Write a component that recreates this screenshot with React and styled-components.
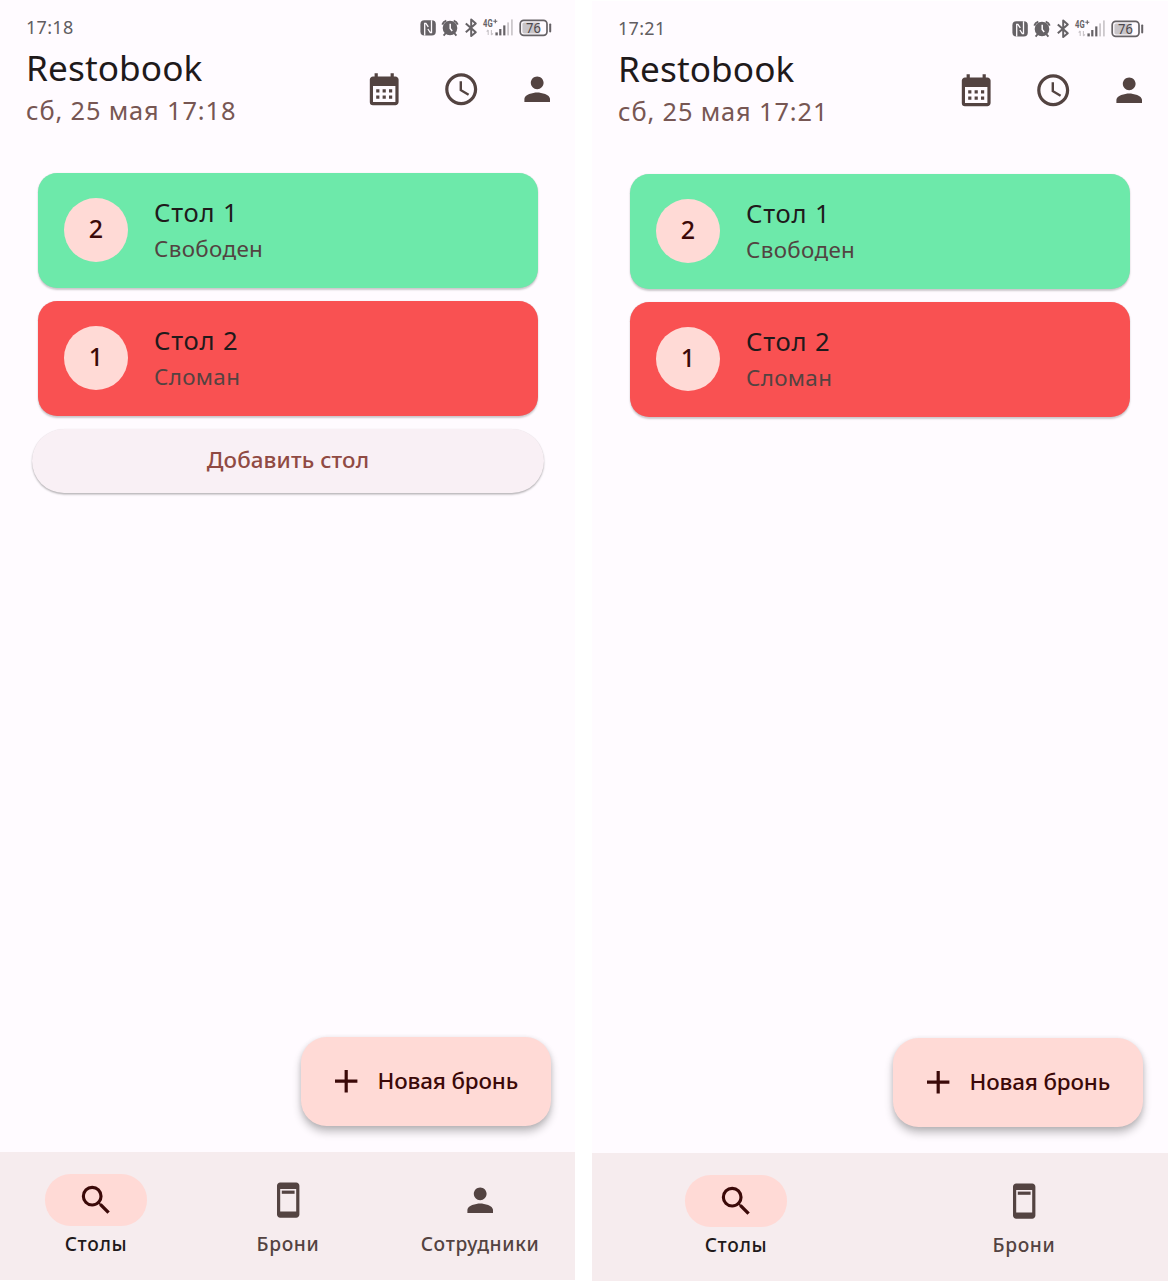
import React from 'react';
import styled, { createGlobalStyle } from 'styled-components';
import { MdCalendarMonth, MdAccessTime, MdPerson, MdSearch, MdAdd } from 'react-icons/md';

const GlobalStyle = createGlobalStyle`
  * { box-sizing: border-box; }
  body {
    margin: 0;
    background: #ffffff;
    font-family: 'Noto Sans', 'Open Sans', sans-serif;
  }
`;

const Page = styled.main`
  display: flex;
  align-items: flex-start;
  gap: 16px;
  width: 1172px;
  height: 1286px;
  overflow: hidden;
`;

const Phone = styled.section`
  display: flex;
  flex-direction: column;
  flex: none;
  width: 576px;
  height: 1280px;
  margin-top: ${(p) => p.$top || 0}px;
  background: linear-gradient(90deg, #fffbff 575px, ${(p) => (p.$top ? '#fffbff' : '#ffffff')} 575px);
`;

const StatusBar = styled.div`
  display: flex;
  align-items: center;
  justify-content: space-between;
  height: 36px;
  padding: 19px 24px 0 26px;
`;

const Time = styled.span`
  padding-bottom: 1px;
  font-size: 18px;
  line-height: 18px;
  letter-spacing: 0.3px;
  color: #615d61;
`;

const StatusIcons = styled.div`
  display: flex;
  align-items: center;
  color: #666266;
  svg { display: block; }
`;

const Header = styled.header`
  display: flex;
  justify-content: space-between;
  height: 102px;
  padding-left: 26px;
`;

const Titles = styled.div`
  display: flex;
  flex-direction: column;
  padding-top: 9px;
`;

const Title = styled.h1`
  margin: 0;
  font-size: 35.2px;
  line-height: 44px;
  font-weight: 400;
  letter-spacing: 0.1px;
  color: #1f1a1b;
`;

const DateLine = styled.div`
  font-size: 25.4px;
  line-height: 42px;
  letter-spacing: 0.86px;
  color: #775653;
  white-space: nowrap;
`;

const Actions = styled.div`
  display: flex;
  padding-top: 15px;
`;

const IconButton = styled.button`
  display: flex;
  align-items: center;
  justify-content: center;
  width: 76.8px;
  height: 76.8px;
  padding: 0;
  border: 0;
  background: none;
  color: #534341;
  font-size: 38.4px;
`;

const Content = styled.div`
  display: flex;
  flex-direction: column;
  flex: 1;
  padding: 35px 32px 25.6px;
`;

const TableCard = styled.article`
  display: flex;
  align-items: center;
  height: 115.2px;
  margin: 0 6.4px 12.8px;
  padding: 0 25.6px;
  gap: 26px;
  border-radius: 19.2px;
  background: ${(p) => p.$color};
  box-shadow: 0 1.5px 2px rgba(0, 0, 0, 0.2), 0 0 1px rgba(0, 0, 0, 0.1);
`;

const Seats = styled.div`
  display: flex;
  align-items: center;
  justify-content: center;
  width: 64px;
  height: 64px;
  margin-bottom: 1px;
  padding-bottom: 5px;
  border-radius: 50%;
  background: #ffdad6;
  color: #3b0908;
  font-size: 25px;
  font-weight: 500;
`;

const TableName = styled.div`
  font-size: 25.6px;
  line-height: 37px;
  letter-spacing: 0.8px;
  color: #1f1a1b;
`;

const TableState = styled.div`
  font-size: 22.4px;
  line-height: 35px;
  letter-spacing: 0.35px;
  color: #534341;
`;

const CardText = styled.div`
  padding-bottom: 1px;
`;

const AddButton = styled.button`
  flex: none;
  width: 512px;
  height: 64px;
  padding: 0 0 2px;
  border: 0;
  border-radius: 32px;
  background: #f9f0f5;
  box-shadow: 0 1.5px 2px rgba(0, 0, 0, 0.28), 0 0 1px rgba(0, 0, 0, 0.08);
  color: #904a43;
  font: 500 22.4px 'Noto Sans', sans-serif;
  letter-spacing: 0.1px;
`;

const Fab = styled.button`
  display: flex;
  align-items: center;
  align-self: flex-end;
  gap: 12.6px;
  width: 250px;
  height: 89.6px;
  margin: auto -7px 0 0;
  padding: 0 0 0 25.6px;
  border: 0;
  border-radius: 25.6px;
  background: #ffdad6;
  box-shadow: 0 6px 9px rgba(0, 0, 0, 0.24), 0 1px 5px rgba(0, 0, 0, 0.1);
  color: #3b0908;
  font: 500 22.4px 'Noto Sans', sans-serif;
  letter-spacing: -0.15px;
  white-space: nowrap;
  svg { flex: none; font-size: 38.4px; }
`;

const FabLabel = styled.span`
  padding-bottom: 2px;
`;

const Nav = styled.nav`
  display: flex;
  flex: none;
  width: ${(p) => p.$width}px;
  height: 128px;
  background: #f6ecee;
`;

const NavItem = styled.div`
  display: flex;
  flex-direction: column;
  align-items: center;
  flex: none;
  width: ${(p) => p.$width}px;
  padding-top: 22.4px;
  color: ${(p) => (p.$active ? '#1f1a1b' : '#534341')};
`;

const Pill = styled.span`
  display: flex;
  align-items: center;
  justify-content: center;
  width: 102.4px;
  height: 51.2px;
  border-radius: 25.6px;
  background: ${(p) => (p.$active ? '#ffdad6' : 'transparent')};
  color: ${(p) => (p.$active ? '#3b0908' : '#534341')};
  font-size: 38.4px;
`;

const NavLabel = styled.span`
  margin-top: 5px;
  font-size: 19.2px;
  line-height: 26px;
  font-weight: 500;
  letter-spacing: 0.65px;
`;

function TicketIcon() {
  return (
    <svg width="1em" height="1em" viewBox="0 0 24 24" fill="currentColor">
      <path fillRule="evenodd" d="M7 1h10c1.1 0 2 .9 2 2v18c0 1.1-.9 2-2 2H7c-1.1 0-2-.9-2-2V3c0-1.1.9-2 2-2zm0 4v14h10V5H7z" />
      <path d="M8 6h8v2H8z" />
    </svg>
  );
}

function StatusGlyphs() {
  return (
    <svg width="132" height="20" viewBox="0 0 132 20" fill="none">
      {/* NFC */}
      <rect x="0.4" y="2.2" width="15.4" height="15.4" rx="4" fill="currentColor" />
      <path d="M4.7 17.6V5.3h1.2l2.4 3.5M11.5 2.2V14.5h-1.2L7.9 11" stroke="#fffbff" strokeWidth="1.3" />
      {/* Alarm */}
      <circle cx="30" cy="10" r="7.3" fill="currentColor" />
      <path d="M22.3 6.6c.6-1.9 2-3.2 4-3.9M37.7 6.6c-.6-1.9-2-3.2-4-3.9M25.8 15l-2.2 2.6M34.2 15l2.2 2.6" stroke="currentColor" strokeWidth="1.9" />
      <path d="M30.2 5.8v4.6l2 2.6" stroke="#fffbff" strokeWidth="1.5" />
      {/* Bluetooth */}
      <path d="M45.8 5.4l10 8.8-4.6 3.8V1.6l4.6 3.8-10 8.8" stroke="currentColor" strokeWidth="2" strokeLinejoin="round" />
      {/* Mobile network */}
      <text x="63" y="8.6" fontSize="10.2" fontWeight="700" fontFamily="Roboto, sans-serif" fill="currentColor" textLength="9.6" lengthAdjust="spacingAndGlyphs">4G</text>
      <path d="M73.3 3.2h4M75.3 1.2v4" stroke="currentColor" strokeWidth="1.1" />
      <path d="M68.2 12v5M66.7 13.6L68.2 12M71.4 12v5M72.9 15.4L71.4 17" stroke="#c8c3c7" strokeWidth="1.1" />
      <rect x="75.4" y="14.4" width="2.4" height="3" fill="currentColor" />
      <rect x="79.2" y="11" width="2.2" height="6.4" fill="currentColor" />
      <rect x="83.2" y="7.4" width="2.2" height="10" fill="currentColor" />
      <rect x="87.2" y="4.4" width="1.8" height="13" fill="#cdc8cc" />
      <rect x="91" y="1.4" width="1.8" height="16" fill="#cdc8cc" />
      {/* Battery */}
      <rect x="100.2" y="2.4" width="26.8" height="15" rx="3.6" stroke="currentColor" strokeWidth="1.7" />
      <path d="M104 4.4h15.6v11H104a1.6 1.6 0 0 1-1.6-1.6V6A1.6 1.6 0 0 1 104 4.4z" fill="#c9c5c9" />
      <rect x="129.2" y="5.4" width="2" height="9" rx="0.8" fill="currentColor" />
      <text x="106" y="15" fontSize="14.4" fontFamily="'Noto Sans', sans-serif" fill="#4c484c" textLength="14.8" lengthAdjust="spacingAndGlyphs">76</text>
    </svg>
  );
}

const tables = [
  { seats: 2, name: 'Стол 1', state: 'Свободен', color: '#6de9aa' },
  { seats: 1, name: 'Стол 2', state: 'Сломан', color: '#f95152' },
];

const tabs = [
  { label: 'Столы', icon: <MdSearch /> },
  { label: 'Брони', icon: <TicketIcon /> },
  { label: 'Сотрудники', icon: <MdPerson /> },
];

function Screen({ time, admin, top }) {
  const items = admin ? tabs : tabs.slice(0, 2);
  return (
    <Phone $top={top}>
      <StatusBar>
        <Time>{time}</Time>
        <StatusIcons><StatusGlyphs /></StatusIcons>
      </StatusBar>
      <Header>
        <Titles>
          <Title>Restobook</Title>
          <DateLine>сб, 25 мая {time}</DateLine>
        </Titles>
        <Actions>
          <IconButton><MdCalendarMonth /></IconButton>
          <IconButton><MdAccessTime /></IconButton>
          <IconButton><MdPerson /></IconButton>
        </Actions>
      </Header>
      <Content>
        {tables.map((t) => (
          <TableCard key={t.name} $color={t.color}>
            <Seats>{t.seats}</Seats>
            <CardText>
              <TableName>{t.name}</TableName>
              <TableState>{t.state}</TableState>
            </CardText>
          </TableCard>
        ))}
        {admin && <AddButton>Добавить стол</AddButton>}
        <Fab><MdAdd /><FabLabel>Новая бронь</FabLabel></Fab>
      </Content>
      <Nav $width={admin ? 575 : 576}>
        {items.map((t, i) => (
          <NavItem key={t.label} $active={i === 0} $width={576 / items.length}>
            <Pill $active={i === 0}>{t.icon}</Pill>
            <NavLabel>{t.label}</NavLabel>
          </NavItem>
        ))}
      </Nav>
    </Phone>
  );
}

export default function App() {
  return (
    <>
      <GlobalStyle />
      <Page>
        <Screen time="17:18" admin />
        <Screen time="17:21" top={1} />
      </Page>
    </>
  );
}
